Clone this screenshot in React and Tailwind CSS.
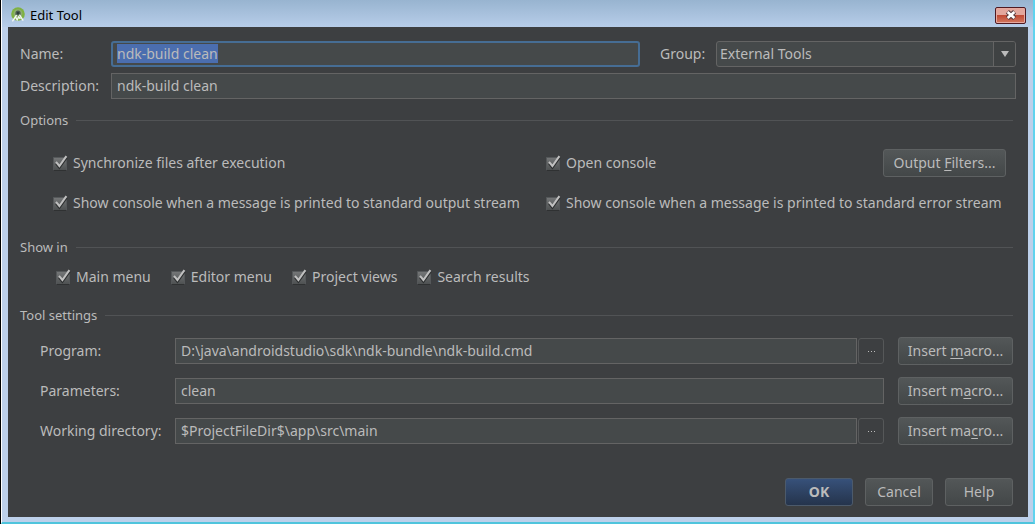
import React, { useEffect, useRef, useState } from 'react';

const fieldClass =
  'h-[26px] min-w-0 flex-1 border border-[#646464] bg-[#45494a] px-[5px] pb-[2px] text-[#bbbbbb] outline-none';

const buttonClass =
  'h-7 rounded-[3px] border border-[#5e6162] bg-linear-to-b from-[#535758] to-[#434748] text-center text-[#bbbbbb]';

const showInOptions = ['Main menu', 'Editor menu', 'Project views', 'Search results'];

const AppIcon = () => (
  <svg viewBox="0 0 16 16" className="h-4 w-4" aria-hidden="true">
    <circle cx="8" cy="7" r="6.8" fill="#7fb242" />
    <circle cx="8" cy="6.6" r="4.4" fill="#8fae70" />
    <path d="M5.4 6.4a2.6 2.8 0 0 1 5.2 0v1.8H5.4z" fill="#4d5f50" />
    <path d="M2.4 14.4 6.6 8M5.4 9.8l1.8 3 1.4-2.8 1.8 1.8M9.4 7.6l3.8 6" fill="none" stroke="#f3f7f3" strokeWidth="1.4" />
    <circle cx="8" cy="6" r="1.2" fill="#2f3f38" />
  </svg>
);

const CloseIcon = () => (
  <svg viewBox="0 0 12 10" className="h-[10px] w-3" aria-hidden="true">
    <path d="M2.4 1.8 9.6 8.2M9.6 1.8 2.4 8.2" stroke="#53383c" strokeWidth="4.6" />
    <path d="M2.6 2 9.4 8M9.4 2 2.6 8" stroke="#ffffff" strokeWidth="2.6" />
  </svg>
);

const CheckBox = ({ label }) => (
  <label className="flex items-center gap-[5px] whitespace-nowrap">
    <span className="grid h-4 w-[15px] items-end">
      <input
        type="checkbox"
        defaultChecked
        className="peer col-start-1 row-start-1 h-[14px] w-[14px] appearance-none rounded-[1px] border border-[#55585a] border-b-[#2f3132] bg-linear-to-b from-[#747677] to-[#4e5152]"
      />
      <svg
        viewBox="0 0 15 16"
        className="pointer-events-none invisible col-start-1 row-start-1 h-4 w-[15px] peer-checked:visible"
        aria-hidden="true"
      >
        <path d="M3.2 8.4 6.4 12.6 13.6 2.6" fill="none" stroke="#2c2e2f" strokeWidth="2.4" />
        <path d="M3 6.8 6.4 11 13.4 1.2" fill="none" stroke="#c0c0c0" strokeWidth="2" />
      </svg>
    </span>
    <span>{label}</span>
  </label>
);

const SectionTitle = ({ children, className }) => (
  <div className={`mr-[3px] flex h-5 items-center gap-2 ${className}`}>
    <h2 className="text-[13px]">{children}</h2>
    <div className="h-px flex-1 bg-[#515355]" />
  </div>
);

const SettingRow = ({ id, label, value, browse, before, mnemonic, after }) => (
  <div className="flex h-7 items-center">
    <label htmlFor={id} className="w-[135px] whitespace-nowrap">{label}</label>
    <div className="flex flex-1 gap-px">
      <input id={id} type="text" defaultValue={value} className={fieldClass} />
      {browse && (
        <button
          type="button"
          aria-label="Browse"
          className="flex h-[26px] w-[26px] items-center justify-center gap-[2px] rounded-[3px] border border-[#565859]"
        >
          <span className="h-px w-px bg-[#bbbbbb]" />
          <span className="h-px w-px bg-[#bbbbbb]" />
          <span className="h-px w-px bg-[#bbbbbb]" />
        </button>
      )}
    </div>
    <button type="button" className={`ml-[14px] w-[115px] ${buttonClass}`}>
      {before}<u className="underline-offset-2">{mnemonic}</u>{after}
    </button>
  </div>
);

const App = () => {
  const nameRef = useRef(null);
  const [name, setName] = useState('ndk-build clean');

  useEffect(() => {
    nameRef.current.focus();
    nameRef.current.select();
  }, []);

  return (
    <div className="bg-black pl-px">
      <div className="flex min-h-screen flex-col border-x border-r-2 border-r-[#5fd3ee] border-b-2 border-b-[#4fc4dc] border-l-white bg-[#bdd0ea] font-['Noto_Sans','Noto_Sans_CJK_SC',sans-serif] text-[14px] leading-5 text-[#bbbbbb]">
        <header className="flex h-[27px] items-center gap-[4px] bg-linear-to-b from-[#98b4d0] to-[#b7cde9] pt-[3px] pr-[7px] pl-2 text-[13px] text-black">
          <AppIcon />
          <h1 className="flex-1">Edit Tool</h1>
          <button
            type="button"
            aria-label="Close"
            className="flex h-[17px] w-[31px] items-center justify-center rounded-[2px] border border-[#4f1a22] bg-linear-to-b from-[#e3a79d] from-45% via-[#c04a35] via-50% to-[#d2785f] shadow-[inset_0_0_0_1px_#e6a9a0]"
          >
            <CloseIcon />
          </button>
        </header>

        <main className="mr-[5px] mb-[5px] ml-[6px] flex-1 bg-[#3d3f41] px-3 pt-[14px] pb-[11px]">
          <form onSubmit={(e) => e.preventDefault()}>
            <div className="flex items-center">
              <label htmlFor="name" className="w-[91px]">Name:</label>
              <input
                id="name"
                ref={nameRef}
                type="text"
                value={name}
                onChange={(e) => setName(e.target.value)}
                className="h-[26px] min-w-0 flex-1 rounded-[3px] border-2 border-[#466d94] bg-[#45494a] px-1 pb-[2px] text-[#bbbbbb] outline-none selection:bg-[#4b6eaf] selection:text-[#bbbbbb]"
              />
              <label htmlFor="group" className="ml-5 w-[56px]">Group:</label>
              <div className="grid w-[300px]">
                <select
                  id="group"
                  className="col-start-1 row-start-1 h-[26px] appearance-none rounded-[3px] border border-[#646464] bg-[#45494a] px-[3px] text-[#bbbbbb] outline-none"
                >
                  <option>External Tools</option>
                </select>
                <span className="pointer-events-none col-start-1 row-start-1 my-px mr-px flex w-[22px] items-center justify-center justify-self-end rounded-r-[2px] border-l border-[#646464] bg-[#3f4243]">
                  <svg viewBox="0 0 8 6" className="h-[6px] w-2" aria-hidden="true">
                    <path d="M0 0h8L4 6z" fill="#bbbbbb" />
                  </svg>
                </span>
              </div>
            </div>
            <div className="mt-[6px] flex items-center">
              <label htmlFor="description" className="w-[91px]">Description:</label>
              <input id="description" type="text" defaultValue="ndk-build clean" className={fieldClass} />
            </div>

            <SectionTitle className="mt-[11px]">Options</SectionTitle>
            <div className="mt-[19px] mr-[10px] ml-[33px] grid grid-cols-[493fr_460fr] gap-y-3">
              <CheckBox label="Synchronize files after execution" />
              <div className="flex items-center justify-between">
                <CheckBox label="Open console" />
                <button type="button" className={`w-[123px] ${buttonClass}`}>
                  Output <u className="underline-offset-2">F</u>ilters...
                </button>
              </div>
              <div className="flex h-7 items-center">
                <CheckBox label="Show console when a message is printed to standard output stream" />
              </div>
              <div className="flex h-7 items-center">
                <CheckBox label="Show console when a message is printed to standard error stream" />
              </div>
            </div>

            <SectionTitle className="mt-5">Show in</SectionTitle>
            <div className="mt-[10px] ml-9 flex flex-wrap gap-x-5">
              {showInOptions.map((label) => (
                <CheckBox key={label} label={label} />
              ))}
            </div>

            <SectionTitle className="mt-[18px]">Tool settings</SectionTitle>
            <div className="mt-3 mr-[3px] ml-5 flex flex-col gap-3">
              <SettingRow id="program" label="Program:" value="D:\java\androidstudio\sdk\ndk-bundle\ndk-build.cmd" browse before="Insert " mnemonic="m" after="acro..." />
              <SettingRow id="parameters" label="Parameters:" value="clean" before="Insert m" mnemonic="a" after="cro..." />
              <SettingRow id="directory" label="Working directory:" value="$ProjectFileDir$\app\src\main" browse before="Insert ma" mnemonic="c" after="ro..." />
            </div>

            <div className="mt-[33px] mr-[3px] flex justify-end gap-3">
              <button
                type="submit"
                className="h-7 w-[68px] rounded-[3px] border border-[#4c5a6b] bg-linear-to-b from-[#37517a] to-[#25344c] font-bold text-[#bbbbbb]"
              >
                OK
              </button>
              <button type="button" className={`w-[68px] ${buttonClass}`}>Cancel</button>
              <button type="button" className={`w-[68px] ${buttonClass}`}>Help</button>
            </div>
          </form>
        </main>
      </div>
    </div>
  );
};

export default App;
